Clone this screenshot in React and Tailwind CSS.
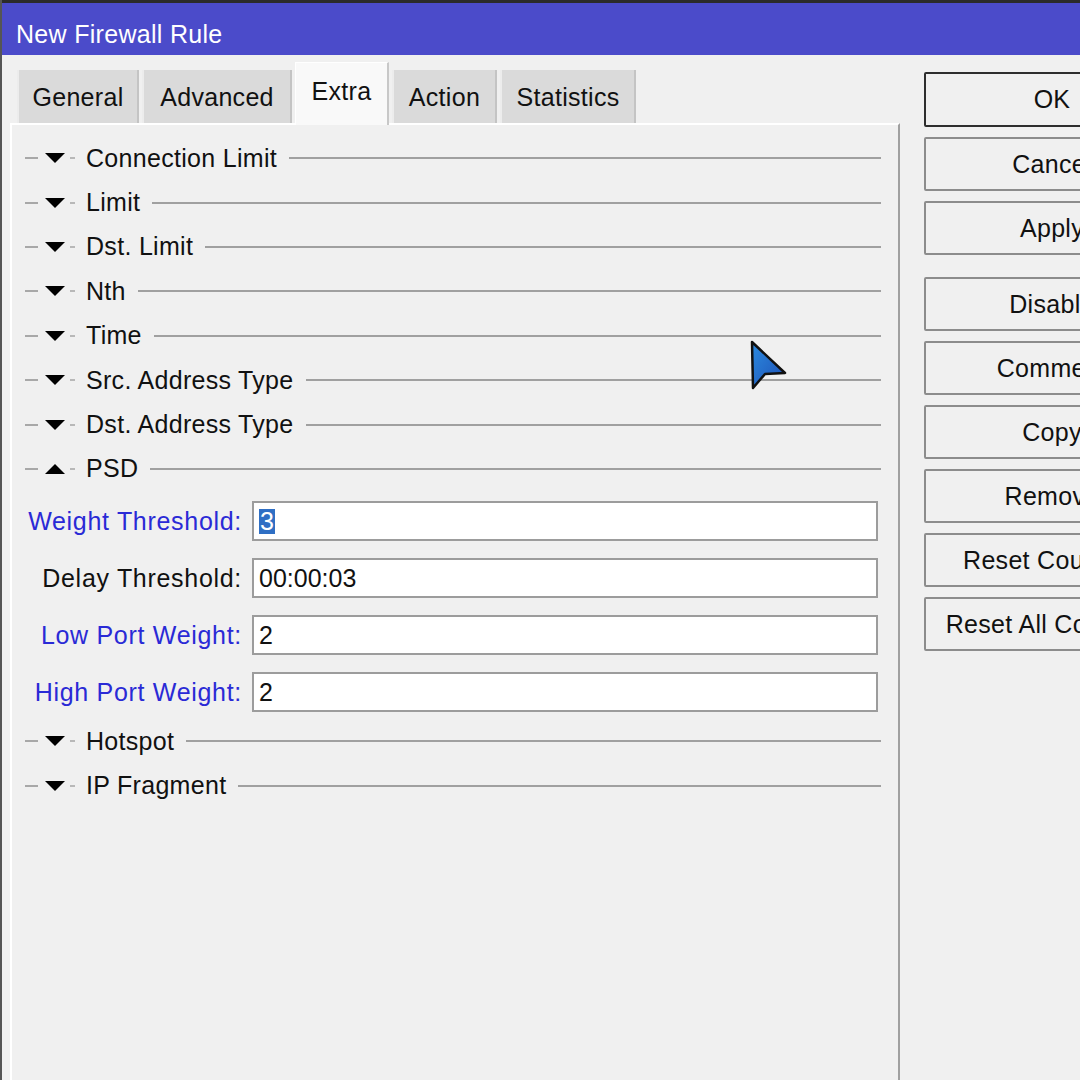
import React from "react";

const sectionsTop = ["Connection Limit", "Limit", "Dst. Limit", "Nth", "Time", "Src. Address Type", "Dst. Address Type"];
const sectionsBottom = ["Hotspot", "IP Fragment"];

const fields = [
  { label: "Weight Threshold:", value: "3", blue: true, selected: true },
  { label: "Delay Threshold:", value: "00:00:03", blue: false },
  { label: "Low Port Weight:", value: "2", blue: true },
  { label: "High Port Weight:", value: "2", blue: true },
];

const tabs = [
  { name: "General", w: "w-[122px]" },
  { name: "Advanced", w: "w-[150px]" },
  { name: "Extra", w: "w-[94px]", active: true },
  { name: "Action", w: "w-[105px]" },
  { name: "Statistics", w: "w-[136px]" },
];

const buttons = [
  { name: "OK", primary: true },
  { name: "Cancel" },
  { name: "Apply", gapAfter: true },
  { name: "Disable" },
  { name: "Comment" },
  { name: "Copy" },
  { name: "Remove" },
  { name: "Reset Counters" },
  { name: "Reset All Counters" },
];

function Section({ title, open }) {
  return (
    <div className="flex items-center h-[44.4px]">
      <div className="w-[13px] h-[2px] bg-[#a8a8a8] ml-[13px]" />
      <div className="w-[20px] flex justify-center ml-[7px]">
        {open ? (
          <div className="w-0 h-0 border-l-[10px] border-r-[10px] border-b-[10px] border-l-transparent border-r-transparent border-b-black" />
        ) : (
          <div className="w-0 h-0 border-l-[10px] border-r-[10px] border-t-[10px] border-l-transparent border-r-transparent border-t-black" />
        )}
      </div>
      <div className="w-[5px] h-[2px] bg-[#b8b8b8] ml-[5px]" />
      <span className="ml-[11px] text-[25px] tracking-[0.3px] text-[#111] leading-none">{title}</span>
      <div className="flex-1 h-[2px] bg-[#a0a0a0] ml-[12px] mr-[17px]" />
    </div>
  );
}

export default function App() {
  return (
    <div
      className="relative w-[1080px] h-[1080px] overflow-hidden bg-[#f0f0f0] border-l-[2px] border-[#555]"
      style={{ fontFamily: '"Liberation Sans", Arial, sans-serif' }}
    >
      {/* title bar */}
      <div className="h-[55px] bg-[#4b4bca] border-t-[3px] border-[#2b2b2b] flex items-center px-[14px] pt-[10px]">
        <span className="text-white text-[25px] tracking-[0.3px] leading-none">New Firewall Rule</span>
      </div>

      <div className="flex">
        {/* left: tabs + panel */}
        <div className="w-[898px] shrink-0 flex flex-col">
          <div className="flex items-end gap-[3px] pl-[15px] h-[68px]">
            {tabs.map((t) =>
              t.active ? (
                <div
                  key={t.name}
                  className={`${t.w} h-[63px] mb-[-2px] bg-[#f9f9f9] border-t border-l border-white border-r-2 border-r-[#c8c8c8] flex items-center justify-center text-[25px] tracking-[0.3px] text-[#111] pb-[4px] z-10`}
                >
                  {t.name}
                </div>
              ) : (
                <div
                  key={t.name}
                  className={`${t.w} h-[53px] bg-[#dadada] border-l-2 border-[#ececec] border-r-2 border-r-[#c4c4c4] flex items-center justify-center text-[25px] tracking-[0.3px] text-[#111] pt-[3px]`}
                >
                  {t.name}
                </div>
              )
            )}
          </div>

          <div className="ml-[8px] h-[960px] border-t-2 border-l-2 border-white border-r-2 border-r-[#a0a0a0] pt-[11px]">
            {sectionsTop.map((s) => (
              <Section key={s} title={s} />
            ))}
            <Section title="PSD" open />

            <div className="flex flex-col gap-[17px] mt-[10px] mb-[7px]">
              {fields.map((f) => (
                <div key={f.label} className="flex items-center">
                  <div
                    className={`w-[230px] text-right text-[25px] tracking-[0.7px] leading-none ${f.blue ? "text-[#2a2ad6]" : "text-[#111]"}`}
                  >
                    {f.label}
                  </div>
                  <div className="ml-[10px] w-[626px] h-[40px] bg-white border-2 border-[#9c9c9c] flex items-center px-[5px] text-[25px] text-[#111] leading-none">
                    {f.selected ? (
                      <span className="bg-[#2f6fc4] text-white px-[1px]">{f.value}</span>
                    ) : (
                      f.value
                    )}
                  </div>
                </div>
              ))}
            </div>

            {sectionsBottom.map((s) => (
              <Section key={s} title={s} />
            ))}
          </div>
        </div>

        {/* right: buttons */}
        <div className="ml-[24px] pt-[17px] flex flex-col shrink-0">
          {buttons.map((b) => (
            <div
              key={b.name}
              className={`w-[256px] ${b.primary ? "h-[55px] border-[#2e2e2e]" : "h-[54px] border-[#8c8c8c]"} ${b.gapAfter ? "mb-[22px]" : "mb-[10px]"} border-2 rounded-[2px] bg-[#f0f0f0] flex items-center justify-center text-[25px] tracking-[0.3px] text-[#111] leading-none shrink-0`}
            >
              {b.name}
            </div>
          ))}
        </div>
      </div>

      {/* mouse cursor */}
      <svg className="absolute left-[745px] top-[338px]" width="45" height="55" viewBox="0 0 45 55">
        <defs>
          <linearGradient id="cur" x1="0" y1="0" x2="1" y2="1">
            <stop offset="0" stopColor="#2c8be0" />
            <stop offset="1" stopColor="#1d4fb4" />
          </linearGradient>
        </defs>
        <polygon points="5,4 38,35 18,36 6,50" fill="url(#cur)" stroke="#111" strokeWidth="2.5" strokeLinejoin="round" />
      </svg>
    </div>
  );
}
